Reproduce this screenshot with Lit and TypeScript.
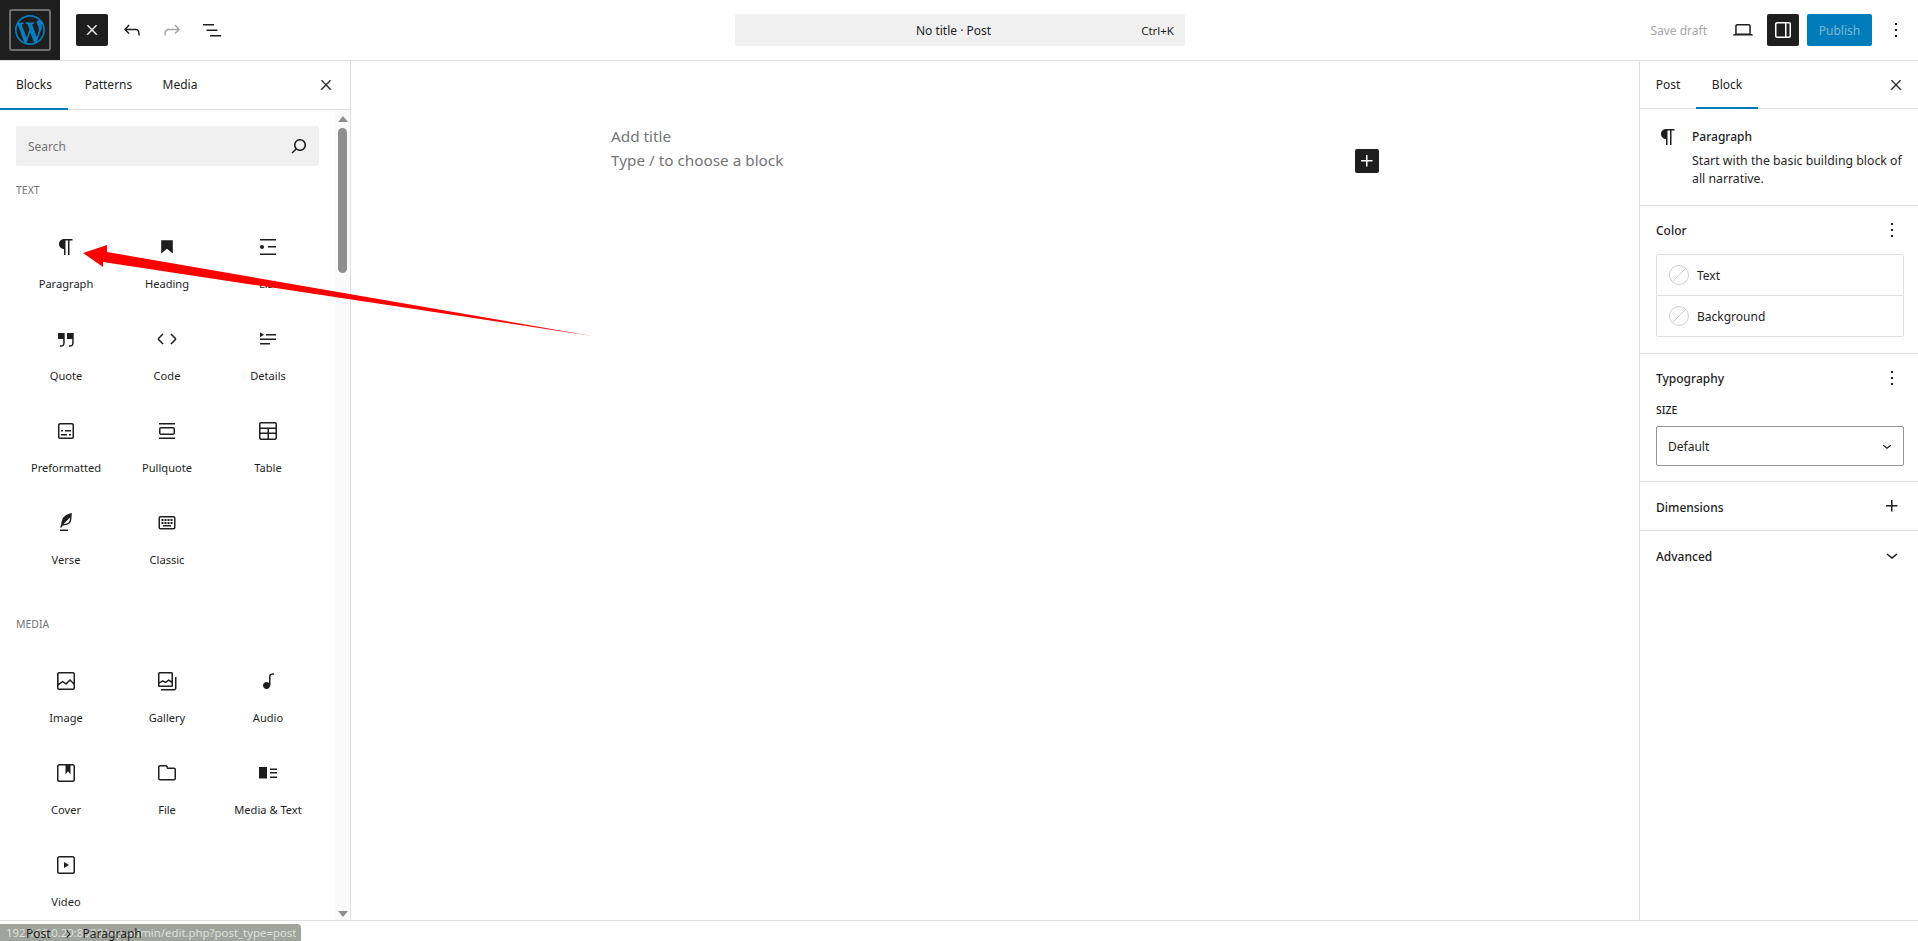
import { LitElement, html, css, svg } from 'lit'
import { customElement } from 'lit/decorators.js'

const icons: Record<string, any> = {
  close: svg`<path stroke="currentColor" stroke-width=".7" d="M13 11.8l6.1-6.3-1-1-6.1 6.2-6.1-6.2-1 1 6.1 6.3-6.5 6.7 1 1 6.5-6.6 6.5 6.6 1-1z"/>`,
  undo: svg`<path d="M18.3 11.7c-.6-.6-1.4-.9-2.3-.9H6.7l2.9-3.3-1.1-1-4.5 5L8.5 16l1-1-2.7-2.7H16c.5 0 .9.2 1.3.5 1 1 1 3.4 1 4.5v.3h1.5v-.2c0-1.5 0-4.3-1.5-5.7z"/>`,
  redo: svg`<path d="M15.6 6.5l-1.1 1 2.9 3.3H8c-.9 0-1.7.3-2.3.9-1.4 1.5-1.4 4.2-1.4 5.6v.2h1.5v-.3c0-1.1 0-3.5 1-4.5.3-.3.7-.5 1.3-.5h9.2L14.5 15l1.1 1.1 4.6-4.6-4.6-5z"/>`,
  listView: svg`<path d="M3 6h11v1.5H3V6Zm3.5 5.5h11V13h-11v-1.5ZM21 17H10v1.5h11V17Z"/>`,
  search: svg`<path d="M13 5c-3.3 0-6 2.7-6 6 0 1.4.5 2.7 1.3 3.7l-3.8 3.8 1.1 1.1 3.8-3.8c1 .8 2.3 1.3 3.7 1.3 3.3 0 6-2.7 6-6S16.3 5 13 5zm0 10.5c-2.5 0-4.5-2-4.5-4.5s2-4.5 4.5-4.5 4.5 2 4.5 4.5-2 4.5-4.5 4.5z"/>`,
  paragraph: svg`<path d="m9.99609 14v-.2251l.00391.0001v6.225h1.5v-14.5h2.5v14.5h1.5v-14.5h3v-1.5h-8.50391c-2.76142 0-5 2.23858-5 5 0 2.7614 2.23858 5 5 5z"/>`,
  heading: svg`<path d="M6.2 5.2v13.4l5.8-4.8 5.8 4.8V5.2z"/>`,
  list: svg`<path d="M4 4v1.5h16V4H4zm8 8.5h8V11h-8v1.5zM4 20h16v-1.5H4V20zm4-8c0-1.1-.9-2-2-2s-2 .9-2 2 .9 2 2 2 2-.9 2-2z"/>`,
  quote: svg`<path d="M13 6v6h5.2v4c0 .8-.2 1.4-.5 1.7-.6.6-1.6.6-2.5.5h-.3v1.5h.5c1 0 2.3-.1 3.3-1 .6-.6 1-1.6 1-2.8V6H13zm-9 6h5.2v4c0 .8-.2 1.4-.5 1.7-.6.6-1.6.6-2.5.5h-.3v1.5h.5c1 0 2.3-.1 3.3-1 .6-.6 1-1.6 1-2.8V6H4v6z"/>`,
  code: svg`<path d="M20.8 10.7l-4.3-4.3-1.1 1.1 4.3 4.3c.1.1.1.3 0 .4l-4.3 4.3 1.1 1.1 4.3-4.3c.7-.8.7-1.9 0-2.6zM4.2 11.8l4.3-4.3-1-1-4.3 4.3c-.7.7-.7 1.8 0 2.5l4.3 4.3 1.1-1.1-4.3-4.3c-.2-.1-.2-.3-.1-.4z"/>`,
  details: svg`<path d="M4 16h10v1.5H4V16Zm0-4.5h16V13H4v-1.5ZM10 7h10v1.5H10V7Z"/><path d="m4 5.25 4 2.5-4 2.5v-5Z"/>`,
  preformatted: svg`<path d="M18 4H6c-1.1 0-2 .9-2 2v12c0 1.1.9 2 2 2h12c1.1 0 2-.9 2-2V6c0-1.1-.9-2-2-2zm.5 14c0 .3-.2.5-.5.5H6c-.3 0-.5-.2-.5-.5V6c0-.3.2-.5.5-.5h12c.3 0 .5.2.5.5v12zM7 16.5h6V15H7v1.5zm4-4h6V11h-6v1.5zM9 11H7v1.5h2V11zm6 5.5h2V15h-2v1.5z"/>`,
  pullquote: svg`<path d="M18 8H6c-1.1 0-2 .9-2 2v4c0 1.1.9 2 2 2h12c1.1 0 2-.9 2-2v-4c0-1.1-.9-2-2-2zm.5 6c0 .3-.2.5-.5.5H6c-.3 0-.5-.2-.5-.5v-4c0-.3.2-.5.5-.5h12c.3 0 .5.2.5.5v4zM4 4v1.5h16V4H4zm0 16h16v-1.5H4V20z"/>`,
  table: svg`<path d="M19 3H5c-1.1 0-2 .9-2 2v14c0 1.1.9 2 2 2h14c1.1 0 2-.9 2-2V5c0-1.1-.9-2-2-2zM5 4.5h14c.3 0 .5.2.5.5v3.5h-15V5c0-.3.2-.5.5-.5zm8 5.5h6.5v3.5H13V10zm-1.5 3.5h-7V10h7v3.5zm-7 5.5v-4h7v4.5H5c-.3 0-.5-.2-.5-.5zm14.5.5h-6V15h6.5v4c0 .3-.2.5-.5.5z"/>`,
  verse: svg`<path d="M17.8 2l-.9.3c-.1 0-3.6 1-5.2 2.1C10 5.5 9.3 6.5 8.9 7.1c-.6.9-1.7 4.7-1.7 6.3l-.9 2.3c-.2.4 0 .8.4 1 .1 0 .2.1.3.1.3 0 .6-.2.7-.5l.6-1.5c.3 0 .7-.1 1.2-.2.7-.1 1.4-.3 2.2-.5.8-.2 1.6-.5 2.4-.8.7-.3 1.4-.7 1.9-1.2s.8-1.2 1-1.9c.2-.7.3-1.6.4-2.4.1-.8.1-1.7.2-2.5 0-.8.1-1.5.2-2.1V2zm-1.9 5.6c-.1.8-.2 1.5-.3 2.1-.2.6-.4 1-.6 1.3-.3.3-.8.6-1.4.9-.7.3-1.4.5-2.2.8-.6.2-1.3.3-1.8.4L15 7.5c.3-.3.6-.7 1-1.1 0 .4 0 .8-.1 1.2zM6 20h8v-1.5H6V20z"/>`,
  keyboard: svg`<path d="m16 15.5h-8v-1.5h8zm-7.5-2.5h-2v-2h2zm3 0h-2v-2h2zm3 0h-2v-2h2zm3 0h-2v-2h2zm-9-3h-2v-2h2zm3 0h-2v-2h2zm3 0h-2v-2h2zm3 0h-2v-2h2z"/><path d="m18.5 6.5h-13a.5.5 0 0 0 -.5.5v9.5a.5.5 0 0 0 .5.5h13a.5.5 0 0 0 .5-.5v-9.5a.5.5 0 0 0 -.5-.5zm-13-1.5h13a2 2 0 0 1 2 2v9.5a2 2 0 0 1 -2 2h-13a2 2 0 0 1 -2-2v-9.5a2 2 0 0 1 2-2z"/>`,
  image: svg`<path d="M19 3H5c-1.1 0-2 .9-2 2v14c0 1.1.9 2 2 2h14c1.1 0 2-.9 2-2V5c0-1.1-.9-2-2-2zM5 4.5h14c.3 0 .5.2.5.5v8.4l-3-2.9c-.3-.3-.8-.3-1 0L11.9 14 9 12c-.3-.2-.6-.2-.8 0l-3.6 2.6V5c-.1-.3.1-.5.4-.5zm14 15H5c-.3 0-.5-.2-.5-.5v-2.4l4.1-3 3 1.9c.3.2.7.2.9-.1L16 12l3.5 3.4V19c0 .3-.2.5-.5.5z"/>`,
  gallery: svg`<path fill-rule="evenodd" d="M16.375 4.5H4.625a.125.125 0 0 0-.125.125v8.254l2.859-1.54a.75.75 0 0 1 .68-.016l2.384 1.142 2.89-2.074a.75.75 0 0 1 .874 0l2.313 1.66V4.625a.125.125 0 0 0-.125-.125Zm.125 9.398-2.75-1.975-2.813 2.02a.75.75 0 0 1-.76.067l-2.444-1.17L4.5 14.583v1.792c0 .069.056.125.125.125h11.75a.125.125 0 0 0 .125-.125v-2.477ZM4.625 3C3.728 3 3 3.728 3 4.625v11.75C3 17.273 3.728 18 4.625 18h11.75c.898 0 1.625-.727 1.625-1.625V4.625C18 3.728 17.273 3 16.375 3H4.625ZM20 8v11c0 .69-.31 1-.999 1H6v1.5h13.001c1.52 0 2.499-.982 2.499-2.5V8H20Z"/>`,
  audio: svg`<path d="M17.7 4.3c-1.2 0-2.8 0-3.8 1-.6.6-.9 1.5-.9 2.6V14c-.6-.6-1.5-1-2.5-1C8.6 13 7 14.6 7 16.5S8.6 20 10.5 20c1.5 0 2.8-1 3.3-2.3.5-.8.7-1.8.7-2.5V7.9c0-.7.2-1.2.5-1.6.6-.6 1.8-.6 2.8-.6h.3V4.3h-.4z"/>`,
  cover: svg`<path d="M18.7 3H5.3C4 3 3 4 3 5.3v13.4C3 20 4 21 5.3 21h13.4c1.3 0 2.3-1 2.3-2.3V5.3C21 4 20 3 18.7 3zm.8 15.7c0 .4-.4.8-.8.8H5.3c-.4 0-.8-.4-.8-.8V5.3c0-.4.4-.8.8-.8h6.2v8.9l2.5-3.1 2.5 3.1V4.5h2.2c.4 0 .8.4.8.8v13.4z"/>`,
  file: svg`<path fill-rule="evenodd" d="M12.848 8a1 1 0 0 1-.914-.594l-.723-1.63a.5.5 0 0 0-.447-.276H5a.5.5 0 0 0-.5.5v11.5a.5.5 0 0 0 .5.5h14a.5.5 0 0 0 .5-.5v-9A.5.5 0 0 0 19 8h-6.152Zm.612-1.5a.5.5 0 0 1-.462-.31l-.445-1.084A2 2 0 0 0 10.763 4H5a2 2 0 0 0-2 2v11.5a2 2 0 0 0 2 2h14a2 2 0 0 0 2-2v-9a2 2 0 0 0-2-2h-5.54Z"/>`,
  mediaText: svg`<path d="M3 6v11.5h8V6H3Zm11 3h7V7.5h-7V9Zm7 3.5h-7V11h7v1.5ZM14 17h7v-1.5h-7V17Z"/>`,
  video: svg`<path d="M18.7 3H5.3C4 3 3 4 3 5.3v13.4C3 20 4 21 5.3 21h13.4c1.3 0 2.3-1 2.3-2.3V5.3C21 4 20 3 18.7 3zm.8 15.7c0 .4-.4.8-.8.8H5.3c-.4 0-.8-.4-.8-.8V5.3c0-.4.4-.8.8-.8h13.4c.4 0 .8.4.8.8v13.4zM10 15l5-3-5-3v6z"/>`,
  plus: svg`<path d="M11 12.5V17.5H12.5V12.5H17.5V11H12.5V6H11V11H6V12.5H11Z"/>`,
  more: svg`<path d="M13 19h-2v-2h2v2zm0-6h-2v-2h2v2zm0-6h-2V5h2v2z"/>`,
  chevronDown: svg`<path d="M17.5 11.6L12 16l-5.5-4.4.9-1.2L12 14l4.5-3.6 1 1.2z"/>`,
  chevronRight: svg`<path d="M10.6 6L9.4 7l4.6 5-4.6 5 1.2 1 5.4-6z"/>`,
  drawer: svg`<path fill-rule="evenodd" d="M18 4H6c-1.1 0-2 .9-2 2v12c0 1.1.9 2 2 2h12c1.1 0 2-.9 2-2V6c0-1.1-.9-2-2-2zm-4 14.5H6c-.3 0-.5-.2-.5-.5V6c0-.3.2-.5.5-.5h8v13zm4.500-.5c0 .3-.2.5-.5.5h-2.500v-13H18c.3 0 .5.2.5.5v12z"/>`,
  desktop: svg`<path d="M20.5 16h-.7V8c0-1.1-.9-2-2-2H6.200c-1.100 0-2 .9-2 2v8h-.7c-.8 0-1.500.7-1.500 1.500h20c0-.8-.7-1.500-1.500-1.500zM5.700 8c0-.3.2-.5.5-.5h11.600c.3 0 .5.2.5.5v7.600H5.700V8z"/>`,
}

const icon = (name: string, size = 24) =>
  html`<svg class="icon" width=${size} height=${size} viewBox="0 0 24 24" fill="currentColor">${icons[name]}</svg>`

const textBlocks = [
  ['Paragraph', 'paragraph'],
  ['Heading', 'heading'],
  ['List', 'list'],
  ['Quote', 'quote'],
  ['Code', 'code'],
  ['Details', 'details'],
  ['Preformatted', 'preformatted'],
  ['Pullquote', 'pullquote'],
  ['Table', 'table'],
  ['Verse', 'verse'],
  ['Classic', 'keyboard'],
]

const mediaBlocks = [
  ['Image', 'image'],
  ['Gallery', 'gallery'],
  ['Audio', 'audio'],
  ['Cover', 'cover'],
  ['File', 'file'],
  ['Media & Text', 'mediaText'],
  ['Video', 'video'],
]

@customElement('app-root')
export class AppRoot extends LitElement {
  static styles = css`
    :host {
      display: flex;
      flex-direction: column;
      position: relative;
      height: 941px;
      overflow: hidden;
      background: #fff;
      color: #1e1e1e;
      font-family: 'Noto Sans', sans-serif;
      font-size: 12px;
    }
    .icon {
      display: block;
      flex: none;
    }
    .header {
      display: grid;
      grid-template-columns: 735px 450px 1fr;
      align-items: center;
      height: 60px;
      border-bottom: 1px solid #e0e0e0;
      flex: none;
    }
    .tools {
      display: flex;
      align-items: center;
    }
    .logo {
      width: 60px;
      height: 60px;
      background: #1e1e1e;
      display: flex;
      align-items: center;
      justify-content: center;
      margin-right: 16px;
    }
    .logo-box {
      width: 42px;
      height: 42px;
      box-sizing: border-box;
      border: 2px solid #707070;
      border-radius: 3px;
      display: flex;
      align-items: center;
      justify-content: center;
    }
    .btn {
      width: 32px;
      height: 32px;
      border-radius: 2px;
      display: flex;
      align-items: center;
      justify-content: center;
      flex: none;
    }
    .btn.dark {
      background: #1e1e1e;
      color: #fff;
    }
    .tools .btn + .btn {
      margin-left: 8px;
    }
    .muted {
      color: #a7a7a7;
    }
    .command {
      height: 32px;
      background: #f0f0f0;
      border-radius: 2px;
      display: flex;
      align-items: center;
      position: relative;
      justify-content: center;
      padding-right: 13px;
      box-sizing: border-box;
    }
    .command-key {
      position: absolute;
      right: 11px;
      font-size: 11.5px;
      color: #1e1e1e;
    }
    .actions {
      display: flex;
      align-items: center;
      justify-content: flex-end;
      padding-right: 10px;
    }
    .save {
      color: #a7a7a7;
      margin-right: 20px;
    }
    .publish {
      width: 65px;
      height: 32px;
      margin: 0 12px 0 8px;
      background: #007cba;
      color: #7fb8d6;
      border-radius: 2px;
      display: flex;
      align-items: center;
      justify-content: center;
    }
    .kebab {
      width: 24px;
    }
    .sidebar-toggle {
      margin-left: 8px;
    }
    .main {
      flex: 1;
      display: flex;
      min-height: 0;
    }
    .inserter {
      width: 351px;
      box-sizing: border-box;
      border-right: 1px solid #e0e0e0;
      flex: none;
      display: flex;
      flex-direction: column;
    }
    .tabs {
      display: flex;
      align-items: center;
      border-bottom: 1px solid #e0e0e0;
      flex: none;
    }
    .inserter .tabs {
      height: 48px;
    }
    .tab {
      height: 100%;
      display: flex;
      align-items: center;
      justify-content: center;
      box-sizing: border-box;
      border-bottom: 2px solid transparent;
      margin-bottom: -1px;
    }
    .tab.on {
      border-bottom-color: #007cba;
    }
    .tab.blocks-tab {
      width: 68px;
    }
    .tab.patterns-tab {
      width: 81px;
    }
    .tab.media-tab {
      width: 62px;
    }
    .tab.post-tab {
      width: 56px;
    }
    .tab.block-tab {
      width: 62px;
    }
    .tabs .close {
      margin-left: auto;
    }
    .inserter .close {
      margin-right: 8px;
    }
    .inserter-body {
      flex: 1;
      display: flex;
      min-height: 0;
    }
    .blocks {
      flex: 1;
      padding: 16px 16px 0;
      overflow: hidden;
    }
    .search {
      height: 40px;
      background: #f0f0f0;
      border-radius: 2px;
      display: flex;
      align-items: center;
      justify-content: space-between;
      padding: 0 8px 0 12px;
      color: #757575;
    }
    .search .icon {
      color: #1e1e1e;
    }
    .group-title {
      height: 16px;
      line-height: 16px;
      font-size: 10.5px;
      color: #757575;
      text-transform: uppercase;
      margin-top: 16px;
    }
    .grid + .group-title {
      margin-top: 42px;
    }
    .grid {
      display: grid;
      grid-template-columns: repeat(3, 101px);
      grid-auto-rows: 92px;
      margin: 8px 0 0 -0.5px;
    }
    .block {
      padding-top: 29px;
      display: flex;
      flex-direction: column;
      align-items: center;
      box-sizing: border-box;
    }
    .block span {
      margin-top: 16px;
      font-size: 11.1px;
      line-height: 18px;
      white-space: nowrap;
    }
    .scrollbar {
      width: 15px;
      flex: none;
      background: #fafafa;
      display: flex;
      flex-direction: column;
      align-items: center;
      box-sizing: border-box;
      padding: 6px 0 3px;
    }
    .arrow-up,
    .arrow-down {
      width: 0;
      height: 0;
      border-left: 5px solid transparent;
      border-right: 5px solid transparent;
    }
    .arrow-up {
      border-bottom: 6px solid #8f8f8f;
    }
    .arrow-down {
      border-top: 6px solid #8f8f8f;
      margin-top: auto;
    }
    .thumb {
      width: 9px;
      height: 145px;
      margin-top: 6px;
      background: #8f8f8f;
      border-radius: 5px;
    }
    .canvas {
      flex: 1;
      position: relative;
      padding: 63px 0 0 260px;
      font-size: 15.3px;
      color: #757575;
    }
    .canvas div {
      height: 24px;
      line-height: 24px;
    }
    .canvas-row {
      display: flex;
      align-items: center;
      justify-content: space-between;
      width: 768px;
    }
    .add {
      width: 24px;
      height: 24px;
      margin-top: 2px;
      background: #1e1e1e;
      color: #fff;
      border-radius: 2px;
      display: flex;
      align-items: center;
      justify-content: center;
    }
    .sidebar {
      width: 279px;
      box-sizing: border-box;
      border-left: 1px solid #e0e0e0;
      flex: none;
    }
    .sidebar .tabs {
      height: 47px;
    }
    .sidebar .close {
      margin-right: 6px;
    }
    .card {
      display: flex;
      padding: 18px 14px 0 16px;
      height: 97px;
      box-sizing: border-box;
      border-bottom: 1px solid #e0e0e0;
    }
    .card-icon {
      width: 36px;
      flex: none;
      margin-top: -2px;
    }
    .card-title {
      font-weight: 500;
      line-height: 20px;
      margin-bottom: 5px;
    }
    .card-desc {
      font-size: 12.3px;
      line-height: 18px;
    }
    .panel {
      padding: 0 14px 0 16px;
      border-bottom: 1px solid #e0e0e0;
      box-sizing: border-box;
    }
    .panel.last {
      border-bottom: 0;
    }
    .panel-head {
      height: 48px;
      display: flex;
      align-items: center;
      justify-content: space-between;
      font-weight: 500;
    }
    .panel-head .btn {
      width: 24px;
    }
    .panel-head.low span {
      padding-top: 2px;
    }
    .colors {
      border: 1px solid #e0e0e0;
      border-radius: 2px;
      margin-bottom: 16px;
    }
    .color {
      height: 40px;
      display: flex;
      align-items: center;
      padding-left: 12px;
      gap: 8px;
    }
    .color + .color {
      border-top: 1px solid #e0e0e0;
    }
    .size-label {
      font-size: 10.5px;
      font-weight: 500;
      line-height: 16px;
      text-transform: uppercase;
      margin-bottom: 8px;
    }
    .select {
      height: 40px;
      box-sizing: border-box;
      border: 1px solid #949494;
      border-radius: 2px;
      display: flex;
      align-items: center;
      justify-content: space-between;
      padding: 0 7px 0 11px;
      margin-bottom: 15px;
    }
    .footer {
      height: 20px;
      flex: none;
      border-top: 1px solid #e0e0e0;
      position: relative;
    }
    .status {
      position: absolute;
      left: 0;
      bottom: 0;
      width: 301px;
      height: 17px;
      line-height: 18px;
      box-sizing: border-box;
      padding-left: 6px;
      font-size: 11.4px;
      background: #a0a49c;
      color: #dfe1db;
      border-top-right-radius: 4px;
      white-space: nowrap;
      overflow: hidden;
    }
    .crumbs {
      position: relative;
      display: flex;
      align-items: center;
      height: 100%;
      padding: 5px 0 0 26px;
      box-sizing: border-box;
      color: #1e1e1e;
    }
    .crumb-sep {
      margin: 0 7px 0 9px;
    }
    .annotation {
      position: absolute;
      left: 0;
      top: 0;
      pointer-events: none;
    }
  `

  private renderBlocks(items: string[][]) {
    return html`<div class="grid">
      ${items.map(([label, name]) => html`<div class="block">${icon(name)}<span>${label}</span></div>`)}
    </div>`
  }

  private renderColor(label: string) {
    return html`<div class="color">
      <svg width="20" height="20" viewBox="0 0 20 20" fill="none" stroke="#d0d0d0">
        <circle cx="10" cy="10" r="9.500" />
        <path d="M3.500 16.500 16.500 3.500" />
      </svg>
      <span>${label}</span>
    </div>`
  }

  render() {
    return html`
      <header class="header">
        <div class="tools">
          <div class="logo">
            <div class="logo-box">
              <svg width="30" height="30" viewBox="0 0 20 20" fill="#0a7fc0">
                <path d="M20 10c0-5.510-4.490-10-10-10C4.480 0 0 4.490 0 10c0 5.520 4.480 10 10 10 5.510 0 10-4.480 10-10zM7.780 15.370L4.370 6.220c.55-.02 1.170-.08 1.170-.08.5-.06.44-1.130-.06-1.110 0 0-1.450.11-2.370.11-.18 0-.37 0-.58-.01C4.120 2.690 6.870 1.110 10 1.110c2.330 0 4.450.87 6.050 2.340-.68-.11-1.650.39-1.650 1.580 0 .74.45 1.360.9 2.100.35.61.55 1.360.55 2.460 0 1.490-1.400 5-1.400 5l-3.030-8.370c.54-.02.82-.17.82-.17.5-.05.44-1.250-.06-1.220 0 0-1.440.12-2.380.12-.87 0-2.330-.12-2.330-.12-.5-.03-.56 1.200-.06 1.220l.92.08 1.260 3.410zM17.410 10c.24-.64.74-1.870.43-4.250.7 1.290 1.050 2.710 1.050 4.250 0 3.290-1.730 6.240-4.400 7.780.97-2.590 1.940-5.200 2.920-7.780zM6.100 18.090C3.120 16.650 1.110 13.530 1.110 10c0-1.300.23-2.480.72-3.590C3.250 10.300 4.670 14.200 6.100 18.090zm4.030-6.630l2.580 6.980c-.86.29-1.760.45-2.710.45-.79 0-1.570-.11-2.290-.33.81-2.380 1.620-4.740 2.420-7.100z"/>
              </svg>
            </div>
          </div>
          <div class="btn dark">${icon('close', 16)}</div>
          <div class="btn">${icon('undo')}</div>
          <div class="btn muted">${icon('redo')}</div>
          <div class="btn">${icon('listView')}</div>
        </div>
        <div class="command">
          <span>No title · Post</span>
          <span class="command-key">Ctrl+K</span>
        </div>
        <div class="actions">
          <span class="save">Save draft</span>
          <div class="btn">${icon('desktop')}</div>
          <div class="btn dark sidebar-toggle">${icon('drawer')}</div>
          <div class="publish">Publish</div>
          <div class="btn kebab">${icon('more')}</div>
        </div>
      </header>

      <div class="main">
        <aside class="inserter">
          <div class="tabs">
            <div class="tab on blocks-tab">Blocks</div>
            <div class="tab patterns-tab">Patterns</div>
            <div class="tab media-tab">Media</div>
            <div class="btn close">${icon('close', 16)}</div>
          </div>
          <div class="inserter-body">
            <div class="blocks">
              <div class="search"><span>Search</span>${icon('search')}</div>
              <div class="group-title">Text</div>
              ${this.renderBlocks(textBlocks)}
              <div class="group-title">Media</div>
              ${this.renderBlocks(mediaBlocks)}
            </div>
            <div class="scrollbar">
              <div class="arrow-up"></div>
              <div class="thumb"></div>
              <div class="arrow-down"></div>
            </div>
          </div>
        </aside>

        <main class="canvas">
          <div>Add title</div>
          <div class="canvas-row">
            <span>Type / to choose a block</span>
            <span class="add">${icon('plus')}</span>
          </div>
        </main>

        <aside class="sidebar">
          <div class="tabs">
            <div class="tab post-tab">Post</div>
            <div class="tab on block-tab">Block</div>
            <div class="btn close">${icon('close', 16)}</div>
          </div>
          <div class="card">
            <div class="card-icon">${icon('paragraph')}</div>
            <div>
              <div class="card-title">Paragraph</div>
              <div class="card-desc">Start with the basic building block of all narrative.</div>
            </div>
          </div>
          <section class="panel">
            <div class="panel-head"><span>Color</span><div class="btn">${icon('more')}</div></div>
            <div class="colors">${this.renderColor('Text')}${this.renderColor('Background')}</div>
          </section>
          <section class="panel">
            <div class="panel-head"><span>Typography</span><div class="btn">${icon('more')}</div></div>
            <div class="size-label">Size</div>
            <div class="select"><span>Default</span>${icon('chevronDown', 18)}</div>
          </section>
          <section class="panel">
            <div class="panel-head low"><span>Dimensions</span><div class="btn">${icon('plus')}</div></div>
          </section>
          <section class="panel last">
            <div class="panel-head low"><span>Advanced</span><div class="btn">${icon('chevronDown')}</div></div>
          </section>
        </aside>
      </div>

      <footer class="footer">
        <div class="status">192.168.0.29:8080/wp-admin/edit.php?post_type=post</div>
        <div class="crumbs">
          <span>Post</span>
          <span class="crumb-sep">${icon('chevronRight', 16)}</span>
          <span>Paragraph</span>
        </div>
      </footer>

      <svg class="annotation" width="600" height="340" viewBox="0 0 600 340">
        <polygon fill="#fe0000" points="83,253 107,245 107,252 592,336 103,262 103,267" />
      </svg>
    `
  }
}
